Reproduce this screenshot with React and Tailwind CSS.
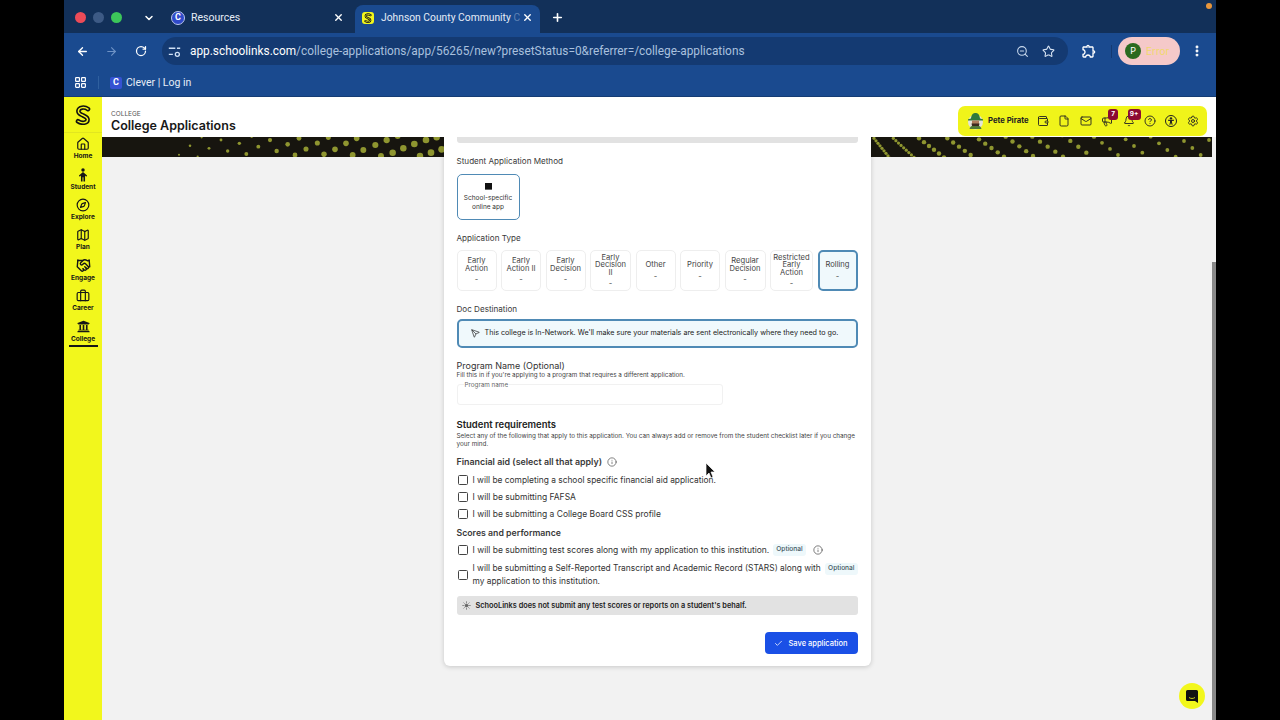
import {
  ArrowLeft,
  ArrowRight,
  Bell,
  Briefcase,
  Check,
  ChevronDown,
  CircleHelp,
  Compass,
  File,
  Handshake,
  House,
  Info,
  LayoutGrid,
  Mail,
  Map,
  Megaphone,
  MoreVertical,
  Plus,
  RotateCw,
  Send,
  Settings,
  Star,
  Sun,
  Wallet,
  X,
  ZoomOut,
} from "lucide-react";
import { FaUniversity } from "react-icons/fa";
import { MdOutlineExtension } from "react-icons/md";

const navItems = [
  { label: "Home", icon: <House size={14} strokeWidth={2} /> },
  {
    label: "Student",
    icon: (
      <svg width="14" height="14" viewBox="0 0 24 24" fill="currentColor">
        <circle cx="12" cy="3.5" r="3" />
        <path d="M12 7l7 6-1.500 2L15.500 13v10h-2.700v-7h-1.600v7H8.500V13l-2 2L5 13z" />
      </svg>
    ),
  },
  { label: "Explore", icon: <Compass size={14} strokeWidth={2} /> },
  { label: "Plan", icon: <Map size={14} strokeWidth={2} /> },
  { label: "Engage", icon: <Handshake size={15} strokeWidth={2.200} /> },
  { label: "Career", icon: <Briefcase size={14} strokeWidth={2} /> },
  { label: "College", icon: <FaUniversity size={13} />, active: true },
];

const appTypes = [
  { lines: ["Early", "Action"], w: "w-[40px]" },
  { lines: ["Early", "Action II"], w: "w-[40px]" },
  { lines: ["Early", "Decision"], w: "w-[40px]" },
  { lines: ["Early", "Decision", "II"], w: "w-[41px]" },
  { lines: ["Other"], w: "w-[40px]" },
  { lines: ["Priority"], w: "w-[40px]" },
  { lines: ["Regular", "Decision"], w: "w-[41px]" },
  { lines: ["Restricted", "Early", "Action"], w: "w-[43px]" },
  { lines: ["Rolling"], w: "w-[40px]", active: true },
];

// left banner dots, read off the picture: x, y, r in a 3x crop
const leftDots = [
  [237, 74, 1.2], [293, 80, 1.3], [270, 47, 1.5], [327, 55, 1.7], [383, 63, 2], [439, 72, 2.3],
  [363, 30, 1.7], [418, 40, 2], [475, 50, 2.3], [530, 63, 2.6], [585, 75, 2.8], [510, 30, 2.5],
  [563, 43, 2.7], [618, 57, 3], [672, 73, 3.2], [597, 25, 2.8], [652, 39, 3], [705, 58, 3.3],
  [758, 75, 3.4], [685, 22, 3], [738, 40, 3.3], [790, 60, 3.5], [843, 78, 3.5], [770, 25, 3.3],
  [826, 45, 3.6], [878, 68, 3.8], [860, 30, 3.7], [910, 55, 3.8], [960, 78, 3.8], [943, 42, 3.9],
  [993, 68, 3.9], [978, 30, 3.9], [1025, 58, 4], [893, 18, 3.5], [1010, 22, 3.8], [305, 22, 1.3],
  [455, 20, 1.5],
];

// right banner: strokes of dots, x0, y0, x1, y1, count
const rightLines = [
  [30, 25, 78, 85, 9], [88, 25, 150, 82, 9], [165, 25, 240, 82, 6], [250, 25, 320, 75, 5],
  [345, 28, 420, 80, 5], [425, 20, 507, 78, 5], [505, 20, 597, 80, 5], [595, 15, 667, 68, 4],
  [690, 20, 762, 75, 4], [785, 28, 835, 68, 3], [860, 20, 935, 80, 4], [960, 33, 1010, 75, 3],
  [1035, 30, 1035, 30, 1],
];

const rightDots = rightLines.flatMap(([x0, y0, x1, y1, n]) =>
  Array.from({ length: n }, (_, i) => {
    const t = n === 1 ? 0 : i / (n - 1);
    return [x0 + (x1 - x0) * t, y0 + (y1 - y0) * t];
  }),
);

const BannerLeft = () => (
  <svg width="342" height="20" viewBox="0 0 342 20">
    {leftDots.map(([x, y, r], i) => (
      <circle key={i} cx={x / 3 - 2} cy={y / 3 - 7} r={r * 0.85} fill="#8f9630" />
    ))}
  </svg>
);

const BannerRight = () => (
  <svg width="342" height="20" viewBox="0 0 342 20">
    {rightDots.map(([x, y], i) => (
      <circle key={i} cx={x / 3 - 6} cy={y / 3 - 7} r={x < 160 ? 1.6 : x < 700 ? 2.2 : 1.9} fill="#8f9630" />
    ))}
  </svg>
);

const Favicon = () => (
  <div className="w-[14px] h-[14px] rounded-full bg-[#2f49c8] border border-[#b9c6ea] flex items-center justify-center text-white text-[9px] font-bold leading-none">
    C
  </div>
);

const logoPath = "M18 5C14 2 7 2.500 6.500 7c-.4 3.500 3.500 4.500 5.500 5.500s5.500 2 5.500 5c0 4.500-7 5-11.500 2";

// double stroked S: a thick stroke with a thin one of the ground colour over it
const Logo = ({ size = 18 }) => (
  <svg width={size} height={size} viewBox="0 0 24 24" fill="none" strokeLinecap="round">
    <path d={logoPath} stroke="#111" strokeWidth="5.500" />
    <path d={logoPath} stroke="#f2f71c" strokeWidth="1.700" />
  </svg>
);

const Avatar = () => (
  <svg width="17" height="18" viewBox="0 0 17 18">
    <circle cx="8.500" cy="10" r="7.500" fill="#e4e4d8" />
    <path d="M4 6.500C4.500 2 6.500 1 8.500 1s4 1 4.500 5.500l3 .8v1.200H1V7.300z" fill="#2f7a3c" />
    <rect x="5" y="8.500" width="7" height="4" fill="#b07d5c" />
    <path d="M4.500 11.500h8l-1 4.500h-6z" fill="#3a2a20" />
    <path d="M2.500 17c.5-2 1.500-3 2.500-3h7c1 0 2 1 2.500 3z" fill="#4f7a3a" />
  </svg>
);

const TuneIcon = () => (
  <svg width="13" height="13" viewBox="0 0 16 16" fill="none" stroke="#cfe0f5" strokeWidth="1.600">
    <path d="M1 4h8M1 11.500h5M11 4h4" />
    <circle cx="11.500" cy="11.500" r="2.500" />
  </svg>
);

const ChromeTabs = () => (
  <div className="h-[33px] pt-[2px] bg-[#123059] flex items-center text-white text-[10.500px] font-['Roboto',sans-serif]">
    <div className="flex items-center gap-[7px] ml-[11px]">
      <div className="w-[11px] h-[11px] rounded-full bg-[#ec4b58]" />
      <div className="w-[11px] h-[11px] rounded-full bg-[#3d5a85]" />
      <div className="w-[11px] h-[11px] rounded-full bg-[#3cc65a]" />
    </div>
    <ChevronDown size={12} strokeWidth={3} className="ml-[21px]" />
    <div className="flex items-center w-[182px] ml-[16px]">
      <Favicon />
      <span className="ml-[6px] text-[#e6edf7]">Resources</span>
      <X size={11} strokeWidth={3} className="ml-auto mr-[9px]" />
    </div>
    <div className="w-[185px] h-[28px] self-end rounded-t-lg bg-[#1a4a8f] flex items-center pl-[7px] pb-[3px] ml-[2px]">
      <div className="w-[12px] h-[12px] rounded-[3px] bg-[#f2f71c] flex items-center justify-center">
        <Logo size={10} />
      </div>
      <span className="ml-[7px] text-[10.300px] whitespace-nowrap text-[#e6edf7]">
        Johnson County Community <span className="text-[#5f82b5]">C</span>
      </span>
      <X size={11} strokeWidth={3} className="ml-auto mr-[7px] shrink-0" />
    </div>
    <Plus size={13} strokeWidth={3} className="ml-[11px]" />
  </div>
);

const ChromeToolbar = () => (
  <div className="h-[36px] bg-[#1a4a8f] flex items-center text-white">
    <ArrowLeft size={13} strokeWidth={2.500} className="ml-[12px]" />
    <ArrowRight size={13} strokeWidth={2} className="ml-[16px] text-[#6f93c6]" />
    <RotateCw size={12} strokeWidth={2.500} className="ml-[17px]" />
    <div className="ml-[15px] w-[906px] h-[28px] rounded-full bg-[#143a72] flex items-center pl-[6px] pr-[13px]">
      <TuneIcon />
      <span className="ml-[9px] pt-[1px] text-[11.850px] font-['Roboto',sans-serif] whitespace-nowrap text-[#a9c0de]">
        <span className="text-white">app.schoolinks.com</span>
        /college-applications/app/56265/new?presetStatus=0&referrer=/college-applications
      </span>
      <ZoomOut size={13} className="ml-auto text-[#c8d8ec]" />
      <Star size={13} strokeWidth={2} className="ml-[13px] text-[#d8e4f3]" />
    </div>
    <MdOutlineExtension size={16} className="ml-[13px]" />
    <div className="w-px h-[13px] bg-[#143a72] ml-[14px]" />
    <div className="ml-[6px] w-[62px] h-[28px] rounded-full bg-[#f5c9c9] flex items-center pl-[7px]">
      <div className="w-[16px] h-[16px] rounded-full bg-[#2a6a1f] text-[9px] flex items-center justify-center">P</div>
      <span className="ml-[5px] text-[10px] text-[#f1d96a]">Error</span>
    </div>
    <MoreVertical size={14} strokeWidth={3} className="ml-[10px]" />
  </div>
);

const ChromeBookmarks = () => (
  <div className="h-[28px] bg-[#1a4a8f] flex items-center text-white font-['Roboto',sans-serif] text-[10.500px] border-b border-[#153c74]">
    <LayoutGrid size={13} strokeWidth={2.200} className="ml-[10px]" />
    <div className="w-px h-[13px] bg-[#2f609f] ml-[11px]" />
    <div className="w-[12px] h-[12px] rounded-[2px] bg-[#3552d2] ml-[11px] flex items-center justify-center text-[9px] font-bold leading-none">
      C
    </div>
    <span className="ml-[4px] pt-[1px] text-[#e6edf7]">Clever | Log in</span>
  </div>
);

const Sidebar = () => (
  <div className="w-[38px] bg-[#f2f71c] flex flex-col items-center text-[#161616]">
    <div className="h-[36px] w-full flex items-center justify-center border-b border-[#e2e620]">
      <Logo size={20} />
    </div>
    <div className="flex flex-col mt-[1px]">
      {navItems.map(({ label, icon, active }) => (
        <div key={label} className="h-[30.400px] w-[38px] flex flex-col items-center justify-center relative">
          <div className="h-[14px] flex items-center">{icon}</div>
          <span className="text-[6.500px] leading-[10px] font-bold">{label}</span>
          {active && <div className="absolute bottom-[0px] left-[5px] w-[29px] h-[1.500px] bg-[#161616]" />}
        </div>
      ))}
    </div>
  </div>
);

const UserPill = () => (
  <div className="mt-[9px] w-[249px] h-[30px] rounded-[7px] bg-[#f0f41a] flex items-center pl-[9px] text-[#222]">
    <Avatar />
    <span className="ml-[4px] w-[45px] text-[7.700px] font-bold whitespace-nowrap">Pete Pirate</span>
    <div className="flex items-center gap-[9.400px] ml-[4px]">
      <Wallet size={12} strokeWidth={1.800} />
      <File size={12} strokeWidth={1.800} />
      <Mail size={12} strokeWidth={1.800} />
      <div className="relative">
        <Megaphone size={12} strokeWidth={1.800} />
        <div className="absolute -top-[6px] left-[7px] w-[10px] h-[11px] rounded-[3px] bg-[#8c0b32] text-white text-[6.500px] font-bold flex items-center justify-center">7</div>
      </div>
      <div className="relative">
        <Bell size={12} strokeWidth={1.800} />
        <div className="absolute -top-[6px] left-[5px] w-[13px] h-[11px] rounded-[3px] bg-[#8c0b32] text-white text-[6.500px] font-bold flex items-center justify-center">9+</div>
      </div>
      <CircleHelp size={12} strokeWidth={1.800} />
      <div className="w-[12px] h-[12px] rounded-full border-[1.300px] border-[#222] flex items-center justify-center">
        <svg width="8" height="8" viewBox="0 0 24 24" fill="#222">
          <circle cx="12" cy="4" r="3.500" />
          <path d="M3 8h18v3l-6 1v4l2 7h-3l-2-6-2 6H7l2-7v-4l-6-1z" />
        </svg>
      </div>
      <Settings size={12} strokeWidth={1.800} />
    </div>
  </div>
);

const Header = () => (
  <div className="h-[40px] bg-white flex items-start justify-between pl-[9px] pr-[9px]">
    <div className="flex flex-col pt-[13px]">
      <span className="text-[6.500px] leading-[8px] text-[#555]">COLLEGE</span>
      <span className="text-[12.500px] leading-[16px] font-semibold text-[#181818]">College Applications</span>
    </div>
    <UserPill />
  </div>
);

const FieldLabel = ({ children, className }) => (
  <div className={`text-[8.100px] leading-[12px] text-[#3a3a3a] ${className}`}>{children}</div>
);

const CheckRow = ({ children, className }) => (
  <div className={`flex items-center text-[8.500px] text-[#333] ${className}`}>
    <div className="w-[10px] h-[10px] shrink-0 ml-[1px] mr-[5px] rounded-[1.500px] border-[1.200px] border-[#444] bg-white" />
    {children}
  </div>
);

const OptionalTag = () => (
  <span className="px-[3px] h-[12px] rounded-[3px] bg-[#eef8fb] text-[6.600px] font-medium text-[#3f5560] flex items-center shrink-0">
    Optional
  </span>
);

const Card = () => (
  <div className="relative w-[427px] h-[529px] bg-white rounded-b-md shadow-[0_1px_5px_rgba(0,0,0,0.18)] px-[13px]">
    <div className="h-[6px] bg-[#e2e2e2] rounded-b-[3px]" />
    <FieldLabel className="mt-[12px]">Student Application Method</FieldLabel>
    <div className="mt-[7px] w-[63px] h-[46px] rounded-[5px] border-[1.500px] border-[#4f8ab5] flex flex-col items-center pt-[7.500px]">
      <div className="w-[7px] h-[7px] bg-[#111] mb-[4.500px] border-b border-[#666]" />
      <span className="text-[6.500px] leading-[8.500px] text-[#333] text-center">
        School-specific
        <br />
        online app
      </span>
    </div>
    <FieldLabel className="mt-[12px]">Application Type</FieldLabel>
    <div className="mt-[6px] flex justify-between">
      {appTypes.map(({ lines, w, active }) => (
        <div
          key={lines.join(" ")}
          className={`${w} h-[41px] rounded-[5px] flex flex-col items-center justify-center text-[7.600px] leading-[7.500px] text-center text-[#444] ${
            active ? "border-2 border-[#4f8ab5] bg-[#f0f9fc]" : "border border-[#eeeeee]"
          }`}
        >
          {lines.map((line) => (
            <span key={line}>{line}</span>
          ))}
          <span className="mt-[4px]">-</span>
        </div>
      ))}
    </div>
    <FieldLabel className="mt-[12px]">Doc Destination</FieldLabel>
    <div className="mt-[4px] h-[29px] rounded-[5px] border-2 border-[#4f8ab5] bg-[#f0f9fc] flex items-center pl-[12px] text-[7.200px] text-[#222]">
      <Send size={9} strokeWidth={1.800} className="mr-[5px] -scale-x-100" />
      This college is In-Network. We'll make sure your materials are sent electronically where they need to go.
    </div>
    <div className="mt-[12px] text-[9px] leading-[12px] text-[#333]">Program Name (Optional)</div>
    <div className="text-[6.300px] leading-[7px] text-[#444]">
      Fill this in if you're applying to a program that requires a different application.
    </div>
    <div className="relative mt-[5px] w-[266px] h-[21px] rounded-[3px] border border-[#f1f1f1]">
      <span className="absolute -top-[4px] left-[6px] bg-white px-[1px] text-[6.300px] leading-[8px] text-[#666]">Program name</span>
    </div>
    <div className="mt-[13px] text-[9.500px] leading-[13px] font-semibold text-[#222]">Student requirements</div>
    <div className="mt-[1px] text-[6.350px] leading-[8px] text-[#444]">
      Select any of the following that apply to this application. You can always add or remove from the student checklist later if you change your mind.
    </div>
    <div className="mt-[8px] flex items-center text-[8.900px] leading-[12px] font-semibold text-[#3a3a3a]">
      Financial aid (select all that apply)
      <Info size={10} strokeWidth={1.500} className="ml-[5px]" />
    </div>
    <CheckRow className="mt-[6px] h-[12px]">
      <span className="text-[8.400px]">I will be completing a school specific financial aid application.</span>
    </CheckRow>
    <CheckRow className="mt-[5px] h-[12px]">I will be submitting FAFSA</CheckRow>
    <CheckRow className="mt-[5px] h-[12px]">I will be submitting a College Board CSS profile</CheckRow>
    <div className="mt-[7px] text-[8.750px] leading-[12px] font-semibold text-[#3a3a3a]">Scores and performance</div>
    <CheckRow className="mt-[5px] h-[12px]">
      <span className="text-[8.500px]">I will be submitting test scores along with my application to this institution.</span>
      <span className="ml-[4px]">
        <OptionalTag />
      </span>
      <Info size={10} strokeWidth={1.500} className="ml-[7px]" />
    </CheckRow>
    <CheckRow className="mt-[6px] h-[26px]">
      <span className="w-[352px] text-[8.400px] leading-[13px]">
        I will be submitting a Self-Reported Transcript and Academic Record (STARS) along with my application to this institution.
      </span>
      <span className="self-start mt-[1px] ml-[1px]">
        <OptionalTag />
      </span>
    </CheckRow>
    <div className="mt-[8px] h-[19px] rounded-[3px] bg-[#e2e2e2] flex items-center pl-[5px] text-[7.350px] font-semibold text-[#222]">
      <Sun size={9} fill="currentColor" className="mr-[5px] text-[#666]" />
      SchooLinks does not submit any test scores or reports on a student's behalf.
    </div>
    <div className="mt-[17px] flex justify-end">
      <div className="w-[93px] h-[22px] pt-[1px] rounded-[4px] bg-[#1a50e6] text-white text-[7.500px] font-medium flex items-center justify-center gap-[5px]">
        <Check size={9} />
        Save application
      </div>
    </div>
  </div>
);

const Cursor = () => (
  <svg className="absolute left-[705px] top-[462px]" width="11" height="17" viewBox="0 0 11 17">
    <path d="M1 1v13l3-3 2 5 2-1-2-5h4z" fill="#111" stroke="#fff" strokeWidth="0.700" />
  </svg>
);

export default function App() {
  return (
    <div className="relative w-[1280px] h-[720px] bg-black overflow-hidden antialiased font-['Inter',sans-serif]">
      <div className="w-[1152px] ml-[64px] h-full flex flex-col">
        <ChromeTabs />
        <ChromeToolbar />
        <ChromeBookmarks />
        <div className="flex-1 flex min-h-0 bg-white">
          <Sidebar />
          <div className="flex-1 flex flex-col min-w-0">
            <Header />
            <div className="relative flex-1 flex min-h-0 bg-[#f2f2f2]">
              <div className="flex-1 relative flex justify-center overflow-hidden">
                <div className="absolute top-0 left-0 right-0 h-[20px] bg-[#17150f] flex justify-between">
                  <BannerLeft />
                  <BannerRight />
                </div>
                <Card />
              </div>
              <div className="w-[4px] flex flex-col">
                <div className="h-[125px] bg-[#f2f2f2]" />
                <div className="flex-1 bg-[#8a8a8a]" />
              </div>
              <div className="absolute right-[11px] bottom-[11px] w-[26px] h-[26px] rounded-full bg-[#f2f71c] flex items-center justify-center">
                <svg width="12" height="13" viewBox="0 0 12 13">
                  <path d="M1.500 0h9A1.500 1.500 0 0 1 12 1.500V13l-3-2H1.500A1.500 1.500 0 0 1 0 9.500v-8A1.500 1.500 0 0 1 1.500 0z" fill="#111" />
                  <path d="M3 7.500c2 1.300 4 1.300 6 0" stroke="#f2f71c" strokeWidth="0.800" fill="none" />
                </svg>
              </div>
            </div>
          </div>
        </div>
      </div>
      <div className="absolute left-[1206px] top-[3px] w-[6px] h-[6px] rounded-full bg-[#e8963c]" />
      <Cursor />
    </div>
  );
}
